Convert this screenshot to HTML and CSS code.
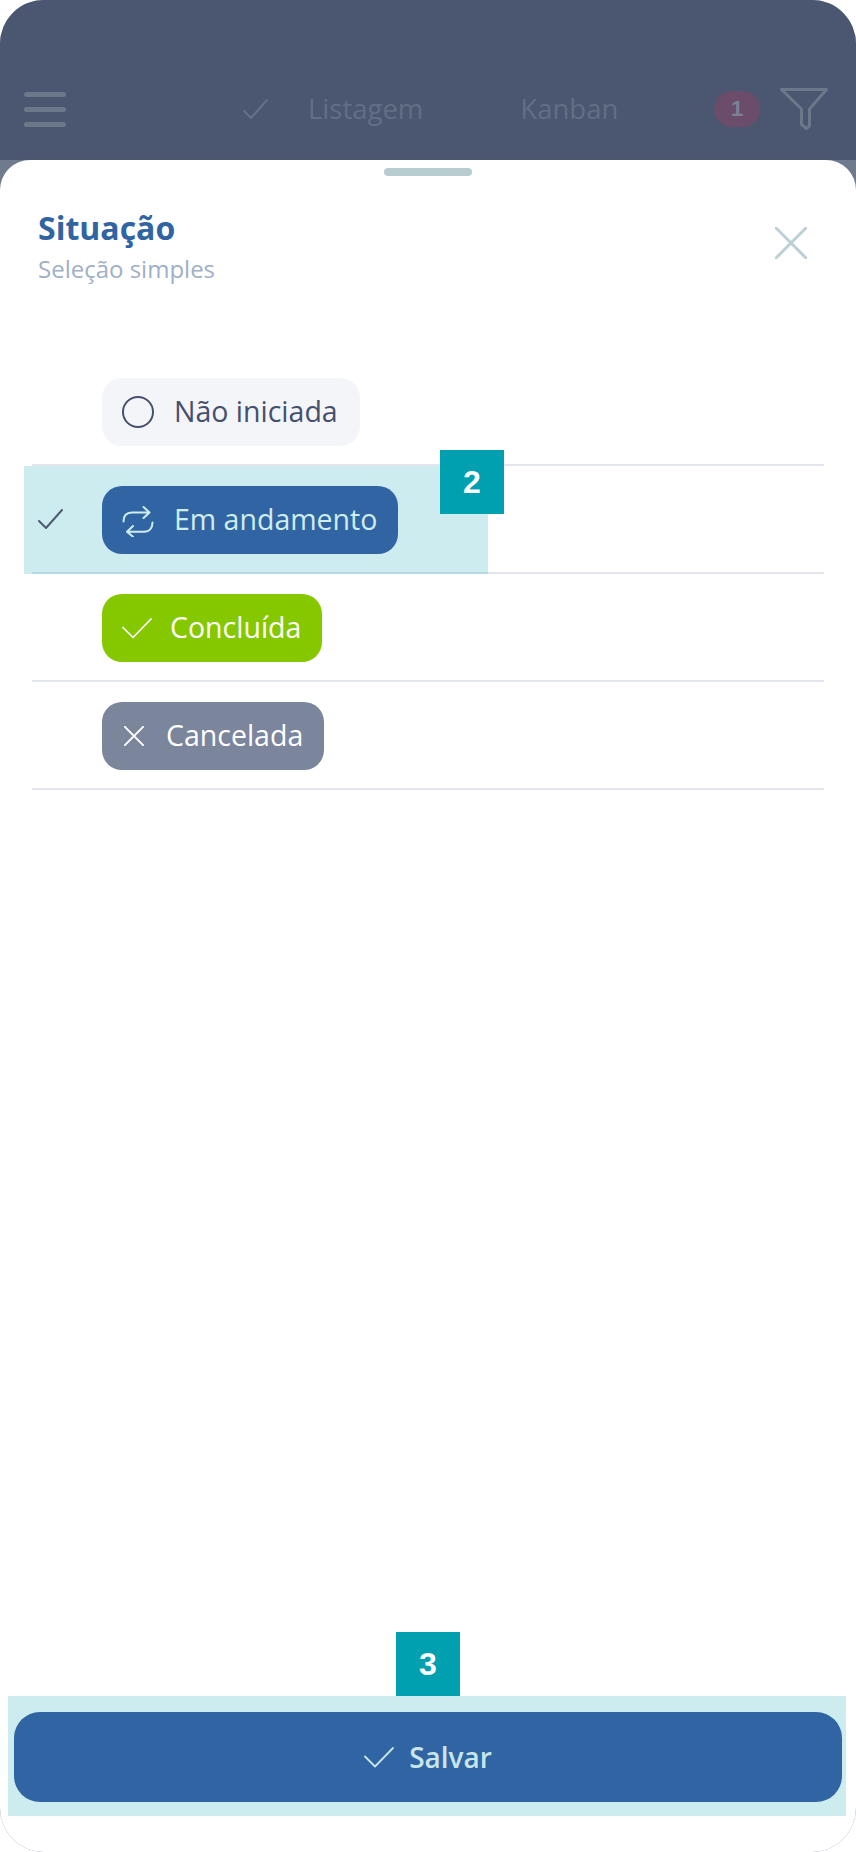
FILE: index.html
```html
<!DOCTYPE html>
<html lang="pt-BR">
<head>
    <meta charset="utf-8" />
    <title>Situação</title>
    <meta name="viewport" content="width=device-width, initial-scale=1" />
    <link rel="stylesheet" href="styles.css">
</head>
<body>
<div class="phone">
  <header class="topbar">
    <div class="menu"><span></span><span></span><span></span></div>
    <svg class="tab-check" viewBox="0 0 25 20"><path d="M1 12l7 7L24 1" /></svg>
    <span class="tab tab-list">Listagem</span>
    <span class="tab tab-kanban">Kanban</span>
    <span class="count">1</span>
    <svg class="funnel" viewBox="0 0 48 42"><path d="M1.5 1.5h45L29.5 21v17l-3 2.5-5-4V21z" /></svg>
  </header>

  <main class="sheet">
    <div class="handle"></div>
    <div class="sheet-head">
      <div>
        <h1>Situação</h1>
        <p>Seleção simples</p>
      </div>
      <svg class="close" viewBox="0 0 32 32"><path d="M1 1l30 30M31 1L1 31" /></svg>
    </div>

    <ul class="options">
      <li class="option">
        <span class="tick"></span>
        <span class="chip chip-todo">
          <svg class="icon-circle" viewBox="0 0 32 32"><circle cx="16" cy="16" r="15" /></svg>
          Não iniciada
        </span>
      </li>
      <li class="option">
        <div class="mark mark-row"></div>
        <div class="step step-2">2</div>
        <span class="tick">
          <svg viewBox="0 0 25 20"><path d="M1 12l7 7L24 1" /></svg>
        </span>
        <span class="chip chip-doing">
          <svg class="icon-repeat" viewBox="0 0 32 34"><path d="M21.5 4l6 5.5-6 5.5M27 9.5H10C4.500 9.500 1.500 13 1.500 18.500M11 23l-6 5.700 6 5M5.500 28.700H22C27.500 28.700 30.500 25 30.500 19.500" /></svg>
          Em andamento
        </span>
      </li>
      <li class="option">
        <span class="tick"></span>
        <span class="chip chip-done">
          <svg class="icon-check" viewBox="0 0 30 21"><path d="M1 9.5l10 10L29 1" /></svg>
          Concluída
        </span>
      </li>
      <li class="option">
        <span class="tick"></span>
        <span class="chip chip-cancel">
          <svg class="icon-x" viewBox="0 0 22 22"><path d="M1 1l20 20M21 1L1 21" /></svg>
          Cancelada
        </span>
      </li>
    </ul>

    <footer class="sheet-foot">
      <div class="step step-3">3</div>
      <button class="save" type="button">
        <svg viewBox="0 0 30 21"><path d="M1 9.5l10 10L29 1" /></svg>
        Salvar
      </button>
    </footer>
  </main>
</div>
</body>
</html>
```

FILE: styles.css
```css
* {
    box-sizing: border-box;
}

html, body {
    margin: 0;
    background-color: #fff;
}

body {
    font-family: "Open Sans", "Noto Sans", sans-serif;
}

svg {
    display: block;
    flex: none;
    fill: none;
    stroke: currentColor;
    stroke-width: 2;
    stroke-linecap: round;
    stroke-linejoin: round;
}

.phone {
    display: flex;
    flex-direction: column;
    width: 856px;
    height: 1852px;
    overflow: hidden;
    border-radius: 44px;
    background-color: #6f7a8c;
}

/* dimmed app bar behind the sheet */
.topbar {
    display: flex;
    align-items: center;
    flex: none;
    height: 160px;
    padding: 58px 28px 0 24px;
    background-color: #4b5670;
    color: #667186;
}

.menu {
    display: flex;
    flex-direction: column;
    gap: 10px;
    width: 42px;
}

.menu span {
    height: 5px;
    border-radius: 3px;
    background-color: #6d778a;
}

.tab-check {
    width: 25px;
    height: 20px;
    margin-left: 177px;
}

.tab {
    font-size: 27.5px;
    line-height: 36px;
    color: #636e84;
}

.tab-list {
    margin-left: 40px;
}

.tab-kanban {
    margin-left: 97px;
}

.count {
    width: 46px;
    height: 36px;
    margin-left: auto;
    border-radius: 18px;
    background-color: #6b4d6b;
    color: #7b8298;
    font-family: "Liberation Sans", sans-serif;
    font-size: 22px;
    font-weight: 700;
    line-height: 36px;
    text-align: center;
}

.funnel {
    width: 48px;
    height: 42px;
    margin-left: 20px;
    stroke-width: 3;
    color: #6d778a;
}

.sheet {
    display: flex;
    flex-direction: column;
    flex: 1;
    border-radius: 30px 30px 0 0;
    background-color: #fff;
}

.handle {
    width: 88px;
    height: 8px;
    margin: 8px auto 0;
    border-radius: 4px;
    background-color: #b7cdd0;
}

.sheet-head {
    display: flex;
    justify-content: space-between;
    height: 182px;
    padding: 30px 49px 0 38px;
}

.sheet-head h1 {
    margin: 0;
    font-size: 32px;
    font-weight: 700;
    line-height: 44px;
    color: #3064a3;
}

.sheet-head p {
    margin: 2px 0 0;
    font-size: 24px;
    line-height: 34px;
    color: #9fb0c6;
}

.close {
    width: 32px;
    height: 32px;
    margin-top: 21px;
    color: #bdd0d6;
    stroke-width: 3;
}

.options {
    margin: 0 32px;
    padding: 0;
    list-style: none;
}

.option {
    position: relative;
    display: flex;
    height: 108px;
    padding-top: 20px;
    border-bottom: 2px solid #e3e6ef;
}

.tick {
    position: relative;
    flex: none;
    width: 70px;
    padding: 23px 0 0 6px;
    color: #4f5a70;
}

.tick svg {
    width: 25px;
    height: 20px;
}

.chip {
    position: relative;
    display: flex;
    align-items: center;
    height: 68px;
    padding: 0 21px 2px 20px;
    border-radius: 20px;
    color: #fff;
    font-size: 28.5px;
}

.chip svg {
    position: relative;
    top: 1px;
}

.chip-todo {
    gap: 20px;
    padding-right: 22px;
    background-color: #f4f5f9;
    color: #45506e;
}

.chip-doing {
    gap: 20px;
    background-color: #3064a3;
    color: #cfecef;
}

.chip-done {
    gap: 18px;
    background-color: #85c800;
}

.chip-cancel {
    gap: 22px;
    background-color: #7b859c;
}

.icon-circle {
    width: 32px;
    height: 32px;
}

.icon-repeat {
    width: 32px;
    height: 34px;
}

.icon-check {
    width: 30px;
    height: 21px;
    stroke-width: 1.7;
}

.icon-x {
    width: 20px;
    height: 20px;
    margin-left: 2px;
    stroke-width: 2.2;
}

/* annotation overlays from the spec sheet */
.mark-row {
    position: absolute;
    top: 0;
    bottom: -2px;
    left: -8px;
    width: 464px;
    background-color: rgba(0, 160, 176, 0.2);
}

.step {
    position: absolute;
    z-index: 2;
    width: 64px;
    height: 64px;
    background-color: #00a0b0;
    color: #fff;
    font-family: "Liberation Sans", sans-serif;
    font-size: 32px;
    font-weight: 700;
    line-height: 64px;
    text-align: center;
}

.step-2 {
    top: -16px;
    left: 408px;
}

.step-3 {
    top: -64px;
    left: 388px;
}

.sheet-foot {
    position: relative;
    margin: auto 10px 36px 8px;
    padding: 16px 4px 14px 6px;
    background-color: #ccecef;
}

.save {
    display: flex;
    align-items: center;
    justify-content: center;
    gap: 15px;
    width: 100%;
    height: 90px;
    border: 0;
    border-radius: 26px;
    background-color: #3064a3;
    color: #c8e6ea;
    font-family: inherit;
    font-size: 28px;
    font-weight: 600;
}

.save svg {
    width: 30px;
    height: 21px;
    stroke-width: 1.8;
}
```
